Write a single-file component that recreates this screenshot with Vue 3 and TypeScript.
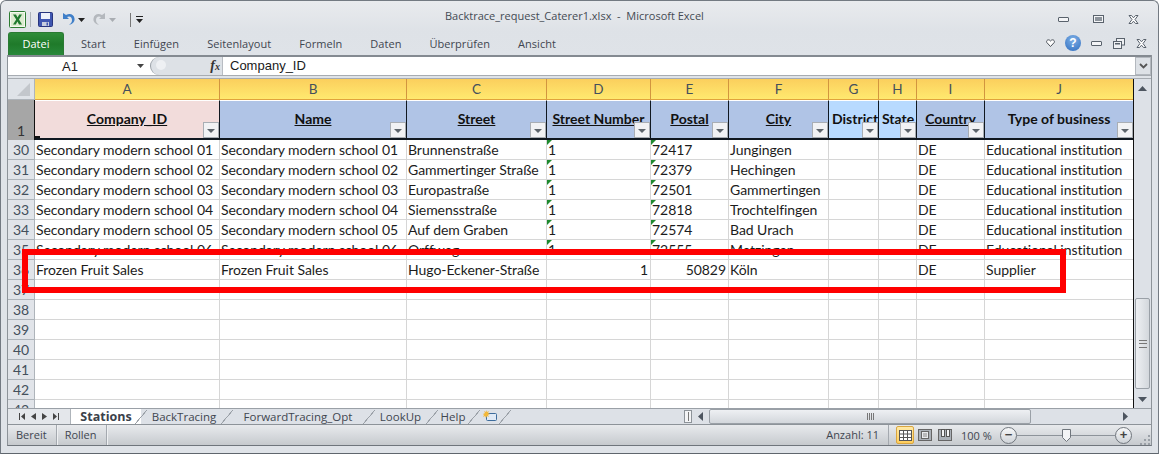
<script setup lang="ts">
interface Col { id: string; w: number; title: string; bg: string; u: boolean; align: string }
const cols: Col[] = [
  { id: 'A', w: 185, title: 'Company_ID', bg: 'pink', u: true, align: 'center' },
  { id: 'B', w: 187, title: 'Name', bg: 'blue', u: true, align: 'center' },
  { id: 'C', w: 140, title: 'Street', bg: 'blue', u: true, align: 'center' },
  { id: 'D', w: 104, title: 'Street Number', bg: 'blue', u: true, align: 'center' },
  { id: 'E', w: 78, title: 'Postal', bg: 'blue', u: true, align: 'center' },
  { id: 'F', w: 100, title: 'City', bg: 'blue', u: true, align: 'center' },
  { id: 'G', w: 50, title: 'District', bg: 'light', u: false, align: 'left' },
  { id: 'H', w: 38, title: 'State', bg: 'light', u: false, align: 'left' },
  { id: 'I', w: 68, title: 'Country', bg: 'blue', u: true, align: 'center' },
  { id: 'J', w: 149, title: 'Type of business', bg: 'blue', u: false, align: 'center' },
]
const template = '27px ' + cols.map((c) => c.w + 'px').join(' ')
const s = (n: string, st: string, pc: string, city: string) => [n, n, st, '1', pc, city, '', '', 'DE', 'Educational institution']
const rows: { n: number; cells: string[]; text: boolean }[] = [
  { n: 30, text: true, cells: s('Secondary modern school 01', 'Brunnenstraße', '72417', 'Jungingen') },
  { n: 31, text: true, cells: s('Secondary modern school 02', 'Gammertinger Straße', '72379', 'Hechingen') },
  { n: 32, text: true, cells: s('Secondary modern school 03', 'Europastraße', '72501', 'Gammertingen') },
  { n: 33, text: true, cells: s('Secondary modern school 04', 'Siemensstraße', '72818', 'Trochtelfingen') },
  { n: 34, text: true, cells: s('Secondary modern school 05', 'Auf dem Graben', '72574', 'Bad Urach') },
  { n: 35, text: true, cells: s('Secondary modern school 06', 'Orffweg', '72555', 'Metzingen') },
  { n: 36, text: false, cells: ['Frozen Fruit Sales', 'Frozen Fruit Sales', 'Hugo-Eckener-Straße', '1', '50829', 'Köln', '', '', 'DE', 'Supplier'] },
  ...[37, 38, 39, 40, 41, 42, 43].map((n) => ({ n, text: false, cells: ['', '', '', '', '', '', '', '', '', ''] })),
]
const tabs = [
  { label: 'BackTracing', w: 86 },
  { label: 'ForwardTracing_Opt', w: 142 },
  { label: 'LookUp', w: 63 },
  { label: 'Help', w: 42 },
]
const ribbon = ['Start', 'Einfügen', 'Seitenlayout', 'Formeln', 'Daten', 'Überprüfen', 'Ansicht']
const windowTitle = 'Backtrace_request_Caterer1.xlsx  -  Microsoft Excel'
</script>

<template>
  <div class="window">
    <div class="titlebar">
      <div class="qat">
        <svg class="xl" width="17" height="17" viewBox="0 0 17 17">
          <rect x="0.5" y="0.5" width="16" height="16" rx="1" fill="#f4f8f0" stroke="#2e7d32" />
          <rect x="2" y="2" width="13" height="13" fill="#dcebd0" />
          <path d="M4 3.500h3l1.600 3 1.600-3h2.800l-3 5 3 5h-3l-1.600-3-1.600 3H4l3.200-5z" fill="#1f7a2e" />
        </svg>
        <span class="qsep"></span>
        <svg width="15" height="15" viewBox="0 0 15 15">
          <rect x="0.5" y="0.5" width="14" height="14" rx="1" fill="#3f56b0" stroke="#28357e" />
          <rect x="3" y="1" width="9" height="6" fill="#eef1fb" />
          <rect x="4" y="10" width="7" height="4" fill="#c8cede" />
          <rect x="8.500" y="10.500" width="1.500" height="3" fill="#3f56b0" />
        </svg>
        <svg class="undo" width="13" height="15" viewBox="0 0 13 15">
          <path d="M1 1v6h6L5 5c3-1.500 5 .5 5 3 0 2-1 3.500-3 5 4-1 6-3.500 5.500-6.500C12 2.500 8 1 4 3z" fill="#3f7fc8" />
        </svg>
        <svg class="drop" width="7" height="4" viewBox="0 0 7 4"><path d="M0 0h7L3.500 4z" fill="#222" /></svg>
        <svg class="redo" width="13" height="15" viewBox="0 0 13 15">
          <path d="M12 1v6H6l2-2C5 3.500 3 5.500 3 8c0 2 1 3.500 3 5-4-1-6-3.500-5.500-6.500C1 2.500 5 1 9 3z" fill="#b4b8bd" />
        </svg>
        <svg class="drop" width="7" height="4" viewBox="0 0 7 4"><path d="M0 0h7L3.500 4z" fill="#a9adb2" /></svg>
        <span class="qsep sm"></span>
        <svg width="7" height="7" viewBox="0 0 7 7"><path d="M0 0h7v1H0zM0 3h7L3.500 7z" fill="#222" /></svg>
      </div>
      <div class="title">{{ windowTitle }}</div>
      <div class="winbtns">
        <span class="w-min"></span>
        <span class="w-max"></span>
        <svg width="11" height="9" viewBox="0 0 11 9"><path d="M1 0.500h2.500l2 2.300 2-2.300H10L7 4.500l3 4H7.500l-2-2.300-2 2.300H1l3-4z" fill="#fff" stroke="#59626c" stroke-width="1" /></svg>
      </div>
    </div>

    <div class="ribbon">
      <div class="datei">Datei</div>
      <div v-for="r in ribbon" :key="r" class="rtab">{{ r }}</div>
      <div class="ribbon-right">
        <svg width="9" height="8" viewBox="0 0 9 8"><path d="M4.500 7.500 0.800 3.500C-.2 1.500 2.500-.5 4.500 2c2-2.500 4.700-.5 3.700 1.500z" fill="#fff" stroke="#4a5159" /></svg>
        <span class="help">?</span>
        <span class="w-min small"></span>
        <svg width="12" height="11" viewBox="0 0 12 11"><rect x="3.500" y="0.500" width="8" height="6.500" fill="#eef0f3" stroke="#59626c" /><rect x="0.500" y="3.500" width="8" height="7" fill="#eef0f3" stroke="#59626c" /><rect x="2" y="5" width="5" height="1.500" fill="#59626c" /></svg>
        <svg width="11" height="9" viewBox="0 0 11 9"><path d="M1 0.500h2.500l2 2.300 2-2.300H10L7 4.500l3 4H7.500l-2-2.300-2 2.300H1l3-4z" fill="#fff" stroke="#59626c" /></svg>
      </div>
    </div>

    <div class="frame">
      <div class="formula">
        <div class="namebox">A1</div>
        <svg class="nb-arrow" width="7" height="4" viewBox="0 0 7 4"><path d="M0 0h7L3.500 4z" fill="#444" /></svg>
        <div class="fxwrap">
          <span class="fxdot"></span>
          <span class="fx">f<small>x</small></span>
        </div>
        <div class="finput">Company_ID</div>
        <div class="fexpand">
          <svg width="9" height="6" viewBox="0 0 9 6"><path d="M1 1l3.500 3.500L8 1" fill="none" stroke="#555" stroke-width="1.800" /></svg>
        </div>
      </div>
      <div class="fgap"></div>

      <div class="sheetarea">
        <div class="sheet">
          <div class="row" :style="{ gridTemplateColumns: template }">
            <div class="corner"><span class="tri"></span></div>
            <div v-for="c in cols" :key="c.id" class="colhead">{{ c.id }}</div>
          </div>
          <div class="row hrow" :style="{ gridTemplateColumns: template }">
            <div class="rowsel">1</div>
            <div v-for="c in cols" :key="c.id" class="hcell" :class="[c.bg, c.align]">
              <span :class="{ ul: c.u }">{{ c.title }}</span>
              <span class="filter"><i></i></span>
              <span v-if="c.id === 'A'" class="handle"></span>
            </div>
          </div>
          <div v-for="r in rows" :key="r.n" class="row drow" :style="{ gridTemplateColumns: template }">
            <div class="rownum">{{ r.n }}</div>
            <div v-for="(v, i) in r.cells" :key="i" class="cell" :class="{ right: !r.text && (i === 3 || i === 4) }">
              <span v-if="r.text && (i === 3 || i === 4)" class="flag"></span>{{ v }}
            </div>
          </div>
        </div>
        <div class="vscroll">
          <div class="vbtn"><svg width="9" height="5" viewBox="0 0 9 5"><path d="M0 5h9L4.500 0z" fill="#4d5560" /></svg></div>
          <div class="vtrack">
            <div class="vthumb"><span></span></div>
          </div>
          <div class="vbtn"><svg width="9" height="5" viewBox="0 0 9 5"><path d="M0 0h9L4.500 5z" fill="#4d5560" /></svg></div>
        </div>
      </div>

      <div class="tabbar">
        <div class="nav">
          <svg width="6" height="7" viewBox="0 0 6 7"><path d="M0 0h1v7H0zM6 0v7L2 3.500z" fill="#444" /></svg>
          <svg width="5" height="7" viewBox="0 0 5 7"><path d="M5 0v7L0 3.500z" fill="#444" /></svg>
          <svg width="5" height="7" viewBox="0 0 5 7"><path d="M0 0v7l5-3.500z" fill="#444" /></svg>
          <svg width="6" height="7" viewBox="0 0 6 7"><path d="M5 0h1v7H5zM0 0v7l4-3.500z" fill="#444" /></svg>
        </div>
        <div class="tab active">Stations</div>
        <div v-for="t in tabs" :key="t.label" class="tab" :style="{ width: t.w + 'px' }">{{ t.label }}</div>
        <div class="tab newsheet">
          <svg width="14" height="13" viewBox="0 0 14 13">
            <rect x="3.500" y="3.500" width="10" height="7" rx="1" fill="#dfe9f5" stroke="#3d6c9c" />
            <path d="M3 0l1 2 2-1-1 2 2 1-2 1 1 2-2-1-1 2-1-2-2 1 1-2-1-1 2-1-1-2 2 1z" fill="#f3b83a" />
          </svg>
        </div>
        <div class="tabrest"></div>
        <div class="split"><i></i></div>
        <div class="hleft"><svg width="5" height="9" viewBox="0 0 5 9"><path d="M5 0v9L0 4.500z" fill="#4d5560" /></svg></div>
        <div class="hthumb"><span></span></div>
        <div class="hrest"></div>
        <div class="hright"><svg width="5" height="9" viewBox="0 0 5 9"><path d="M0 0v9l5-4.500z" fill="#4d5560" /></svg></div>
        <div class="hcorner"></div>
      </div>
    </div>

    <div class="status">
      <div class="st">Bereit</div>
      <div class="st">Rollen</div>
      <div class="st-fill"></div>
      <div class="anzahl">Anzahl: 11</div>
      <div class="views">
        <span class="view on">
          <svg width="13" height="11" viewBox="0 0 13 11"><rect x="0.500" y="0.500" width="12" height="10" fill="#fff" stroke="#555" /><path d="M0 4h13M0 7.500h13M4.500 0v11M8.500 0v11" stroke="#555" /></svg>
        </span>
        <span class="view">
          <svg width="14" height="12" viewBox="0 0 14 12"><rect x="0.500" y="0.500" width="13" height="11" fill="#aab0b7" stroke="#666" /><rect x="3.500" y="2.500" width="7" height="7" fill="#e9ebee" stroke="#666" /><path d="M5 5h4M5 7h4" stroke="#888" /></svg>
        </span>
        <span class="view">
          <svg width="14" height="12" viewBox="0 0 14 12"><rect x="0.500" y="0.500" width="13" height="11" fill="#aab0b7" stroke="#666" /><rect x="3.500" y="0.500" width="3" height="7" fill="#f2f3f5" stroke="#555" /><rect x="8.500" y="0.500" width="3" height="7" fill="#f2f3f5" stroke="#555" /></svg>
        </span>
      </div>
      <div class="zoomval">100 %</div>
      <div class="zoomer">
        <span class="zbtn">−</span>
        <div class="ztrack"><svg class="zthumb" width="9" height="13" viewBox="0 0 9 13"><path d="M0.500 0.500h8v8l-4 4-4-4z" fill="#f3f4f6" stroke="#70767d" /></svg></div>
        <span class="zbtn">+</span>
      </div>
      <svg class="grip" width="11" height="11" viewBox="0 0 11 11">
        <path d="M8 1h2v2H8zM4 5h2v2H4zM8 5h2v2H8zM0 9h2v2H0zM4 9h2v2H4zM8 9h2v2H8z" fill="#9aa0a7" />
      </svg>
    </div>

    <div class="redbox"></div>
  </div>
</template>

<style>
html, body { margin: 0; background: #fff; }
</style>

<style scoped>
.window {
  position: relative;
  box-sizing: border-box;
  width: 1159px;
  height: 454px;
  display: flex;
  flex-direction: column;
  overflow: hidden;
  background: linear-gradient(#e9ebee, #dee2e7 30px, #dfe3e8 55px);
  border: 1px solid #737a82;
  border-bottom-color: #5f666d;
  border-radius: 6px 6px 0 0;
  font-family: "Open Sans", sans-serif;
  color: #3f4650;
}
.titlebar { height: 30px; flex: none; display: flex; align-items: center; position: relative; margin-top: -1px; }
.qat { display: flex; align-items: center; padding: 9px 0 0 8px; }
.xl { margin-right: 4px; }
.qsep { width: 1px; height: 15px; background: #aeb4ba; margin-right: 7px; }
.qsep.sm { margin: 0 5px 0 6px; height: 14px; background: #777; }
.undo { margin-left: 9px; margin-right: 3px; }
.redo { margin-right: 3px; }
.drop { margin-right: 8px; }
.title {
  position: absolute;
  left: 444px;
  top: 8px;
  font-size: 11px;
  white-space: pre;
  color: #444b54;
}
.winbtns { margin-left: auto; padding: 9px 19px 0 0; display: flex; align-items: center; gap: 24px; }
.w-min { display: block; width: 9px; height: 3px; border: 1px solid #59626c; border-radius: 1px; background: #f3f4f6; }
.w-max { display: block; width: 9px; height: 6px; border: 1px solid #59626c; box-shadow: inset 0 0 0 1px #f3f4f6; background: #8d949c; margin-top: -2px; }
.ribbon { height: 25px; flex: none; display: flex; align-items: flex-end; padding-left: 7px; }
.datei {
  width: 56px;
  height: 23px;
  box-sizing: border-box;
  background: linear-gradient(#2f8d3a, #1f7a2a 50%, #28883a);
  border: 1px solid #2a7a33;
  border-bottom: 0;
  border-radius: 3px 3px 0 0;
  color: #fff;
  font-size: 11px;
  text-align: center;
  line-height: 22px;
  margin-right: 3px;
}
.rtab { padding: 0 14px; font-size: 11px; letter-spacing: 0.05px; line-height: 23px; height: 23px; color: #3f4650; }
.ribbon-right { margin-left: auto; padding: 0 11px 4px 0; display: flex; align-items: center; gap: 11px; }
.help {
  width: 16px;
  height: 16px;
  border-radius: 50%;
  background: radial-gradient(circle at 50% 30%, #7fb0e6, #2f6ec0);
  color: #fff;
  font: bold 12px/16px "Liberation Sans", sans-serif;
  text-align: center;
  margin: 0 -1px 0 -1px;
}
.w-min.small { width: 9px; height: 3px; }
.frame {
  flex: none;
  margin: 0 0 0 6px;
  display: flex;
  flex-direction: column;
  border-left: 1px solid #8d9399;
  border-right: 1px solid #8d9399;
  width: 1145px;
  box-sizing: border-box;
}
.formula {
  height: 20px;
  box-sizing: border-box;
  flex: none;
  display: flex;
  align-items: center;
  background: #fff;
  border-top: 2px solid #848a91;
}
.namebox { width: 124px; text-align: center; font: 13px "Liberation Sans", sans-serif; color: #1a1a1a; }
.nb-arrow { margin-left: 5px; }
.fxwrap {
  width: 72px;
  margin-left: 6px;
  height: 18px;
  background: #dde1e6;
  border-radius: 9px 0 0 9px;
  position: relative;
  box-sizing: border-box;
  border-left: 1px solid #9aa0a7;
  display: flex;
  align-items: center;
  justify-content: flex-end;
  padding-right: 2px;
}
.fxdot { position: absolute; left: 5px; top: 3px; width: 10px; height: 10px; border-radius: 50%; background: #eef0f3; }
.fx { font: italic bold 14px/14px "Liberation Serif", serif; color: #333; }
.fx small { font-size: 10px; }
.finput { flex: 1; padding-left: 7px; font: 13px "Liberation Sans", sans-serif; color: #1a1a1a; border-left: 1px solid #b8bcc2; height: 18px; line-height: 17px; }
.fexpand { width: 16px; height: 18px; background: #dde1e6; border: 1px solid #b3b8be; box-sizing: border-box; display: flex; align-items: center; justify-content: center; }
.fgap { height: 4px; flex: none; background: #dfe3e8; border-top: 1px solid #a7acb2; border-bottom: 1px solid #a7acb2; box-sizing: border-box; }
.sheetarea { height: 329px; flex: none; display: flex; overflow: hidden; }
.sheet { width: 1125px; flex: none; height: 329px; overflow: hidden; background: #fff; border-right: 1px solid #111; }
.row { display: grid; }
.corner { height: 21px; background: #dfe3e8; position: relative; border-right: 1px solid #aeb4ba; border-bottom: 1px solid #aeb4ba; box-sizing: border-box; }
.tri { position: absolute; right: 4px; bottom: 3px; border-style: solid; border-width: 0 0 13px 13px; border-color: transparent transparent #c3c7cc transparent; }
.colhead {
  height: 21px;
  box-sizing: border-box;
  background: linear-gradient(#fbcf5d, #ffe96f);
  border-right: 1px solid #d2953f;
  border-bottom: 1px solid #e1a33c;
  text-align: center;
  font: 13.5px/20px Lato, sans-serif;
  color: #44505c;
}
.hrow { height: 40px; }
.rowsel {
  background: #a6a6a6;
  color: #333;
  font: 14px/16px Lato, sans-serif;
  text-align: center;
  padding-top: 23px;
  height: 40px;
  box-sizing: border-box;
  border-right: 1px solid #111;
}
.hcell {
  position: relative;
  height: 40px;
  box-sizing: border-box;
  border-right: 1px solid #101820;
  border-bottom: 2px solid #101820;
  border-top: 1px solid #fff;
  font: bold 14px/36px Lato, sans-serif;
  color: #111;
  white-space: nowrap;
  overflow: hidden;
}
.hcell.center { text-align: center; }
.hcell.left { text-align: left; padding-left: 3px; }
.hcell.pink { background: #f2dcdb; }
.hcell.blue { background: #b0c4e6; }
.hcell.light { background: #b8daff; }
.ul { text-decoration: underline; }
.filter {
  position: absolute;
  right: 0;
  bottom: 0;
  width: 16px;
  height: 16px;
  box-sizing: border-box;
  background: #f1f2f4;
  border: 1px solid #a9aeb4;
  display: flex;
  align-items: center;
  justify-content: center;
}
.filter i { display: block; border-style: solid; border-width: 4px 4px 0 4px; border-color: #5d646b transparent transparent transparent; margin-top: 2px; }
.handle { position: absolute; left: 0; bottom: -1px; width: 5px; height: 3px; background: #111; }
.drow { height: 20px; }
.rownum {
  height: 20px;
  box-sizing: border-box;
  background: #e1e4e9;
  border-right: 1px solid #aeb4ba;
  border-bottom: 1px solid #aeb4ba;
  text-align: center;
  font: 14px/20px Lato, sans-serif;
  color: #44505c;
}
.cell {
  position: relative;
  height: 20px;
  box-sizing: border-box;
  border-right: 1px solid #d6d6d6;
  border-bottom: 1px solid #d6d6d6;
  padding: 0 2px 0 1px;
  font: 14px/20px Lato, sans-serif;
  letter-spacing: -0.05px;
  color: #1c1c1c;
  white-space: nowrap;
  overflow: hidden;
}
.cell.right { text-align: right; }
.flag { position: absolute; left: 0; top: 0; border-style: solid; border-width: 5px 5px 0 0; border-color: #1e8a2e transparent transparent transparent; }
.vscroll { width: 17px; flex: none; background: #dde1e7; display: flex; flex-direction: column; }
.vbtn { height: 18px; flex: none; display: flex; align-items: center; justify-content: center; }
.vtrack { flex: 1; padding: 201px 1px 0 1px; }
.vthumb {
  height: 91px;
  box-sizing: border-box;
  border: 1px solid #9aa0a7;
  border-radius: 2px;
  background: linear-gradient(90deg, #eef0f3, #d3d7dc);
  display: flex;
  align-items: center;
  justify-content: center;
}
.vthumb span { width: 8px; height: 6px; border-top: 1px solid #777; border-bottom: 1px solid #777; background: linear-gradient(#777, #777) center/100% 1px no-repeat; }
.tabbar {
  height: 17px;
  flex: none;
  box-sizing: border-box;
  display: flex;
  align-items: stretch;
  background: #dde1e7;
  border-top: 1px solid #9aa0a7;
  border-bottom: 1px solid #8d9399;
  font-size: 11.5px;
  color: #3f4650;
  line-height: 15px;
}
.nav { width: 63px; flex: none; display: flex; align-items: center; justify-content: space-around; padding: 0 8px; box-sizing: border-box; border-right: 1px solid #aeb4ba; background: #e4e7eb; }
.tab { position: relative; text-align: center; flex: none; box-sizing: border-box; }
.tab::after {
  content: "";
  position: absolute;
  right: -6px;
  top: 1px;
  width: 12px;
  height: 14px;
  background: linear-gradient(to top left, transparent 47%, #9aa0a7 48%, #9aa0a7 52%, transparent 53%);
}
.tab.active { width: 70px; font-weight: 700; font-size: 12.5px; background: #fff; color: #3a414a; }
.tab.newsheet { width: 31px; padding-top: 1px; }
.tabrest { flex: 1; }
.split { width: 8px; margin: 1px 0; flex: none; border: 1px solid #8d9399; background: #f3f4f6; box-sizing: border-box; display: flex; align-items: center; justify-content: center; }
.split i { display: block; width: 1px; height: 9px; background: #777; }
.hleft { width: 17px; flex: none; display: flex; align-items: center; justify-content: center; }
.hthumb {
  width: 322px;
  flex: none;
  box-sizing: border-box;
  border: 1px solid #9aa0a7;
  border-radius: 2px;
  background: linear-gradient(#eef0f3, #d3d7dc);
  display: flex;
  align-items: center;
  justify-content: center;
}
.hthumb span { width: 7px; height: 7px; background: repeating-linear-gradient(90deg, #777 0 1px, transparent 1px 2px); }
.hrest { width: 86px; flex: none; }
.hright { width: 17px; flex: none; display: flex; align-items: center; justify-content: center; }
.hcorner { width: 17px; flex: none; }
.status {
  height: 21px;
  width: 1145px;
  flex: none;
  margin: 0 0 0 6px;
  box-sizing: border-box;
  border-left: 1px solid #8d9399;
  border-right: 1px solid #8d9399;
  border-bottom: 1px solid #6f757c;
  background: linear-gradient(#e8eaed, #c6cace);
  display: flex;
  align-items: center;
  font-size: 11px;
  color: #3f4650;
}
.st { height: 20px; line-height: 20px; padding: 0 9px 0 8px; border-right: 1px solid #a4a9af; box-shadow: 1px 0 0 #eef0f2; }
.st-fill { flex: 1; }
.anzahl { padding-right: 9px; border-right: 1px solid #a4a9af; line-height: 20px; }
.views { display: flex; align-items: center; gap: 3px; padding: 0 8px 0 7px; }
.view { width: 18px; height: 18px; display: flex; align-items: center; justify-content: center; box-sizing: border-box; margin-right: -1px; }
.view.on { background: linear-gradient(#ffe9a6, #ffce5c); border: 1px solid #d9a640; border-radius: 2px; }
.zoomval { width: 39px; }
.zoomer { display: flex; align-items: center; width: 132px; }
.zbtn {
  width: 15px;
  height: 15px;
  flex: none;
  border: 1px solid #70767d;
  border-radius: 50%;
  background: linear-gradient(#f7f8f9, #cfd3d8);
  font: bold 13px/14px "Liberation Sans", sans-serif;
  text-align: center;
  color: #444;
}
.ztrack { flex: 1; height: 1px; background: #8d939a; position: relative; }
.zthumb { position: absolute; left: 45px; top: -6px; }
.grip { margin-left: 8px; margin-top: 8px; }
.redbox {
  position: absolute;
  left: 21px;
  top: 248px;
  width: 1044px;
  height: 44px;
  box-sizing: border-box;
  border: 6px solid #ff0000;
  pointer-events: none;
}
</style>
